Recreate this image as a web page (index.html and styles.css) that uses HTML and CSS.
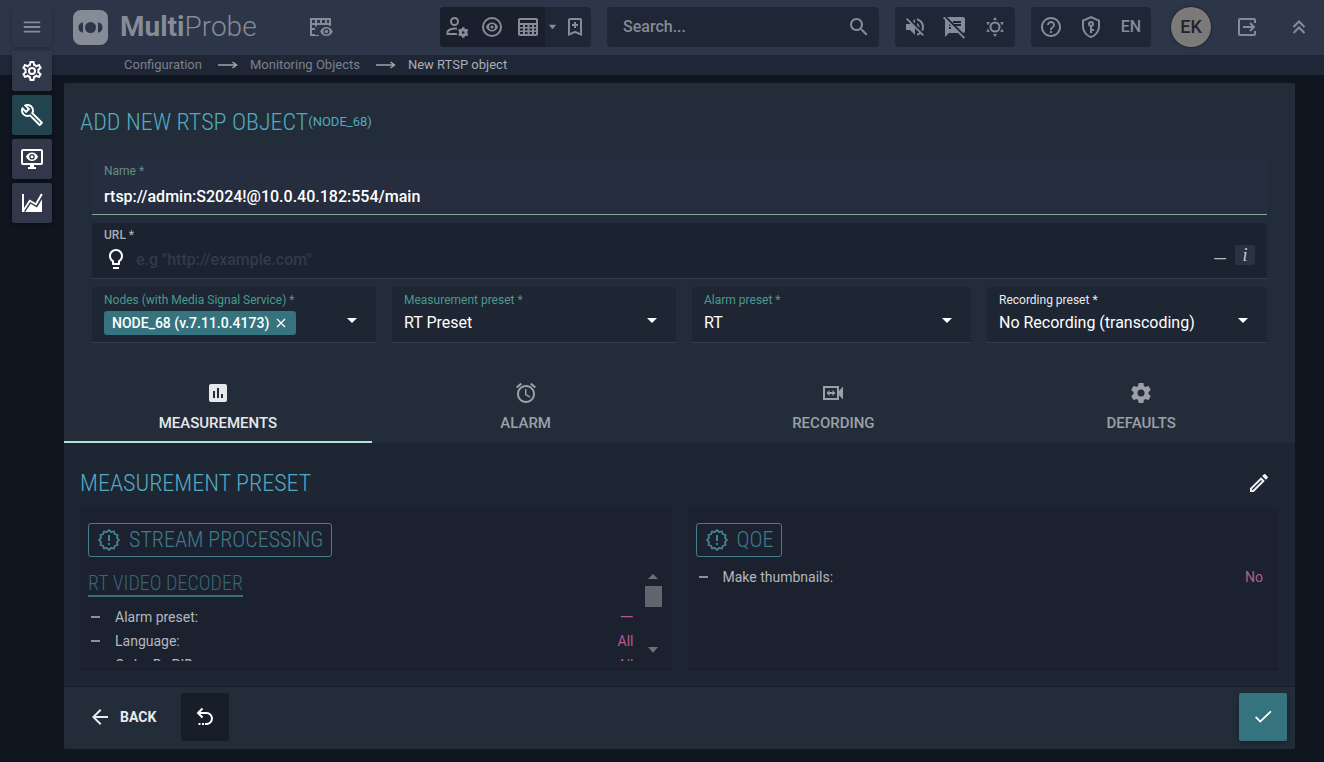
FILE: index.html
```html
<!DOCTYPE html>
<html lang="en">
<head>
<meta charset="utf-8">
<title>MultiProbe – New RTSP object</title>
<meta name="viewport" content="width=device-width, initial-scale=1">
<link rel="stylesheet" href="styles.css">
</head>
<body>
<svg class="sprite" aria-hidden="true">
  <symbol id="menu" viewBox="0 0 24 24"><path d="M3 6h18v2H3zM3 11h18v2H3zM3 16h18v2H3z"/></symbol>
  <symbol id="cog-outline" viewBox="0 0 24 24"><path d="M12,8A4,4 0 0,1 16,12A4,4 0 0,1 12,16A4,4 0 0,1 8,12A4,4 0 0,1 12,8M12,10A2,2 0 0,0 10,12A2,2 0 0,0 12,14A2,2 0 0,0 14,12A2,2 0 0,0 12,10M10,22C9.75,22 9.54,21.82 9.5,21.58L9.13,18.93C8.5,18.68 7.96,18.34 7.44,17.94L4.95,18.95C4.73,19.03 4.46,18.95 4.34,18.73L2.34,15.27C2.21,15.05 2.27,14.78 2.46,14.63L4.57,12.97L4.5,12L4.57,11L2.46,9.37C2.27,9.22 2.21,8.95 2.34,8.73L4.34,5.27C4.46,5.05 4.73,4.96 4.95,5.05L7.44,6.05C7.96,5.66 8.5,5.32 9.13,5.07L9.5,2.42C9.54,2.18 9.75,2 10,2H14C14.25,2 14.46,2.18 14.5,2.42L14.87,5.07C15.5,5.32 16.04,5.66 16.56,6.05L19.05,5.05C19.27,4.96 19.54,5.05 19.66,5.27L21.66,8.73C21.79,8.95 21.73,9.22 21.54,9.37L19.43,11L19.5,12L19.43,13L21.54,14.63C21.73,14.78 21.79,15.05 21.66,15.27L19.66,18.73C19.54,18.95 19.27,19.04 19.05,18.95L16.56,17.95C16.04,18.34 15.5,18.68 14.87,18.93L14.5,21.58C14.46,21.82 14.25,22 14,22H10M11.25,4L10.88,6.61C9.68,6.86 8.62,7.5 7.85,8.39L5.44,7.35L4.69,8.65L6.8,10.2C6.4,11.37 6.4,12.64 6.8,13.8L4.68,15.36L5.43,16.66L7.86,15.62C8.63,16.5 9.68,17.14 10.87,17.38L11.24,20H12.76L13.13,17.39C14.32,17.14 15.37,16.5 16.14,15.62L18.57,16.66L19.32,15.36L17.2,13.81C17.6,12.64 17.6,11.37 17.2,10.2L19.31,8.65L18.56,7.35L16.15,8.39C15.38,7.5 14.32,6.86 13.12,6.62L12.75,4H11.25Z"/></symbol>
  <symbol id="cog" viewBox="0 0 24 24"><path d="M12,15.5A3.5,3.5 0 0,1 8.5,12A3.5,3.5 0 0,1 12,8.5A3.5,3.5 0 0,1 15.5,12A3.5,3.5 0 0,1 12,15.5M19.43,12.97C19.47,12.65 19.5,12.33 19.5,12C19.5,11.67 19.47,11.34 19.43,11L21.54,9.37C21.73,9.22 21.78,8.95 21.66,8.73L19.66,5.27C19.54,5.05 19.27,4.96 19.05,5.05L16.56,6.05C16.04,5.66 15.5,5.32 14.87,5.07L14.5,2.42C14.46,2.18 14.25,2 14,2H10C9.75,2 9.54,2.18 9.5,2.42L9.13,5.07C8.5,5.32 7.96,5.66 7.44,6.05L4.95,5.05C4.73,4.96 4.46,5.05 4.34,5.27L2.34,8.73C2.21,8.95 2.27,9.22 2.46,9.37L4.57,11C4.53,11.34 4.5,11.67 4.5,12C4.5,12.33 4.53,12.65 4.57,12.97L2.46,14.63C2.27,14.78 2.21,15.05 2.34,15.27L4.34,18.73C4.46,18.95 4.73,19.03 4.95,18.95L7.44,17.94C7.96,18.34 8.5,18.68 9.13,18.93L9.5,21.58C9.54,21.82 9.75,22 10,22H14C14.25,22 14.46,21.82 14.5,21.58L14.87,18.93C15.5,18.67 16.04,18.34 16.56,17.94L19.05,18.95C19.27,19.03 19.54,18.95 19.66,18.73L21.66,15.27C21.78,15.05 21.73,14.78 21.54,14.63L19.43,12.97Z"/></symbol>
  <symbol id="wrench" viewBox="0 0 24 24"><path d="M22.61 18.99l-9.08-9.08c.93-2.34.45-5.1-1.44-7C9.79.61 6.21.4 3.66 2.26L7.5 6.11 6.08 7.52 2.25 3.69C.39 6.23.6 9.82 2.9 12.11c1.86 1.86 4.57 2.35 6.89 1.48l9.11 9.11c.39.39 1.02.39 1.41 0l2.3-2.3c.4-.38.4-1.01 0-1.41zm-3 1.6l-9.46-9.46c-.61.45-1.29.72-2 .82-1.36.2-2.79-.21-3.83-1.25C3.37 9.76 2.93 8.5 3 7.26l3.09 3.09 4.24-4.24-3.09-3.09c1.24-.07 2.49.37 3.44 1.31 1.08 1.08 1.49 2.57 1.24 3.96-.12.71-.42 1.37-.88 1.96l9.45 9.45-.88.89z"/></symbol>
  <symbol id="monitor-eye" viewBox="0 0 24 24"><path fill-rule="evenodd" d="M3 2h18a2 2 0 0 1 2 2v12a2 2 0 0 1-2 2h-7v2h2v2H8v-2h2v-2H3a2 2 0 0 1-2-2V4a2 2 0 0 1 2-2zm0 2v12h18V4zm9 1.5c2.7 0 5 1.7 6 4.3-1 2.600-3.300 4.200-6 4.200s-5-1.600-6-4.200c1-2.600 3.300-4.300 6-4.300zm0 1.500a2.800 2.800 0 1 0 0 5.600 2.800 2.800 0 0 0 0-5.600zm0 1.300a1.500 1.500 0 1 1 0 3 1.500 1.500 0 0 1 0-3z"/></symbol>
  <symbol id="chart" viewBox="0 0 24 24"><path d="M2 3h2v14l5.500-8.500 6 3.500L21 2.500l1.700 1L16.300 14.500l-6.200-3.600L4.500 19.500V21H2zM6.500 19l4.200-6.200 6.300 3.600 5-8.200V21H5.200z"/></symbol>
  <symbol id="table-eye" viewBox="0 0 24 24"><path fill-rule="evenodd" d="M1 3h21v8h-2v-1H8v1.500H6V20h4v1H1zm2 2v3h3V5zm5 0v3h3V5zm5 0v3h3V5zm5 0v3h2V5zM3 10v3h3v-3zm0 5v4h3v-4z"/><path fill-rule="evenodd" d="M17.500 12c3 0 5.300 1.800 6.300 4.500-1 2.700-3.300 4.500-6.300 4.500s-5.300-1.800-6.300-4.500c1-2.700 3.300-4.500 6.300-4.500zm0 1.500a3 3 0 1 0 0 6 3 3 0 0 0 0-6zm0 1.300a1.700 1.700 0 1 1 0 3.400 1.700 1.700 0 0 1 0-3.400z"/></symbol>
  <symbol id="account-cog" viewBox="0 0 24 24"><path fill="none" stroke="currentColor" stroke-width="2" d="M13 6.500a3.500 3.500 0 1 1-7 0 3.500 3.500 0 0 1 7 0zM12 13.800c-4-.8-9.500.700-9.500 3.600V19H12"/><path fill="none" stroke="currentColor" stroke-width="3" d="M21 17.500a2.800 2.800 0 1 1-5.600 0 2.800 2.800 0 0 1 5.600 0z"/><path stroke="currentColor" stroke-width="2.400" d="M18.200 12.200v2M18.200 20.800v2M13.600 14.800l1.800 1M21 19.200l1.800 1M13.600 20.200l1.800-1M21 15.800l1.800-1"/></symbol>
  <symbol id="eye-circle" viewBox="0 0 24 24"><path fill-rule="evenodd" d="M12 2a10 10 0 1 1 0 20 10 10 0 0 1 0-20zm0 2a8 8 0 1 0 0 16 8 8 0 0 0 0-16zm0 3.500c2.700 0 5 1.700 6 4.500-1 2.800-3.300 4.500-6 4.500S7 14.800 6 12c1-2.800 3.300-4.500 6-4.500zM12 9a3 3 0 1 0 0 6 3 3 0 0 0 0-6zm0 1.400a1.600 1.600 0 1 1 0 3.200 1.600 1.600 0 0 1 0-3.200z"/></symbol>
  <symbol id="table" viewBox="0 0 24 24"><path fill-rule="evenodd" d="M4 3h16a2 2 0 0 1 2 2v14a2 2 0 0 1-2 2H4a2 2 0 0 1-2-2V5c0-1.100.900-2 2-2zm0 2v3h16V5zm0 5v2h3v-2zm5 0v2h2.500v-2zm4.500 0v2H16v-2zm4.500 0v2h2v-2zM4 13.500v2h3v-2zm5 0v2h2.500v-2zm4.500 0v2H16v-2zm4.500 0v2h2v-2zM4 17v2h3v-2zm5 0v2h2.500v-2zm4.500 0v2H16v-2zm4.500 0v2h2v-2z"/></symbol>
  <symbol id="caret" viewBox="0 0 12 12"><path d="M1 3h10L6 9z"/></symbol>
  <symbol id="caret-up" viewBox="0 0 12 12"><path d="M1 8h10L6 3z"/></symbol>
  <symbol id="bookmark-plus" viewBox="0 0 24 24"><path d="M17,18V5H7V18L12,15.82L17,18M17,3A2,2 0 0,1 19,5V21L12,18L5,21V5C5,3.890 5.900,3 7,3H17M11,7H13V9H15V11H13V13H11V11H9V9H11V7Z"/></symbol>
  <symbol id="search" viewBox="0 0 24 24"><path d="M15.500 14h-.79l-.28-.27C15.410 12.590 16 11.110 16 9.500 16 5.910 13.090 3 9.500 3S3 5.910 3 9.500 5.910 16 9.500 16c1.610 0 3.090-.59 4.230-1.570l.27.28v.79l5 4.990L20.490 19l-4.990-5zm-6 0C7.010 14 5 11.990 5 9.500S7.010 5 9.500 5 14 7.010 14 9.500 11.990 14 9.500 14z"/></symbol>
  <symbol id="volume-off" viewBox="0 0 24 24"><path d="M16.500 12c0-1.770-1.020-3.290-2.500-4.030v2.210l2.450 2.450c.03-.2.05-.41.05-.63zm2.500 0c0 .94-.2 1.820-.54 2.640l1.510 1.510C20.630 14.910 21 13.500 21 12c0-4.280-2.990-7.860-7-8.770v2.060c2.890.86 5 3.540 5 6.710zM4.270 3L3 4.270 7.730 9H3v6h4l5 5v-6.730l4.250 4.250c-.67.52-1.420.93-2.250 1.180v2.060c1.380-.31 2.630-.95 3.690-1.810L19.730 21 21 19.730l-9-9L4.270 3zM12 4L9.910 6.090 12 8.180V4z"/></symbol>
  <symbol id="notes-off" viewBox="0 0 24 24"><path d="M10.540 11l-.54-.54L7.540 8 6 6.460 2.380 2.840 1.270 1.730 0 3l2.010 2.010L2 22l4-4h9l5.730 5.730L22 22.460 17.540 18l-7-7zM8 14H6v-2h2v2zm-2-3V9l2 2H6zm14-9H4.080L10 7.920V6h8v2h-7.920l1 1H18v2h-4.920l6.990 6.990C21.140 17.950 22 17.080 22 16V4c0-1.100-.9-2-2-2z"/></symbol>
  <symbol id="sun" viewBox="0 0 24 24"><circle cx="12" cy="12" r="4.500" fill="none" stroke="currentColor" stroke-width="2"/><path d="M12 2l2 3h-4zM12 22l2-3h-4zM3.300 7l3.600.2-2 3.400zM20.700 7l-3.600.2 2 3.400zM3.300 17l3.600-.2-2-3.400zM20.700 17l-3.600-.2 2-3.400z"/></symbol>
  <symbol id="help" viewBox="0 0 24 24"><path d="M11 18h2v-2h-2v2zm1-16C6.480 2 2 6.480 2 12s4.480 10 10 10 10-4.480 10-10S17.520 2 12 2zm0 18c-4.410 0-8-3.590-8-8s3.590-8 8-8 8 3.590 8 8-3.590 8-8 8zm0-14c-2.210 0-4 1.790-4 4h2c0-1.100.9-2 2-2s2 .9 2 2c0 2-3 1.750-3 5h2c0-2.250 3-2.500 3-5 0-2.210-1.790-4-4-4z"/></symbol>
  <symbol id="shield-key" viewBox="0 0 24 24"><path d="M21,11C21,16.550 17.160,21.740 12,23C6.840,21.740 3,16.550 3,11V5L12,1L21,5V11M12,21C15.750,20 19,15.540 19,11.220V6.300L12,3.180L5,6.300V11.220C5,15.540 8.250,20 12,21M12,6A3,3 0 0,1 15,9C15,10.310 14.170,11.420 13,11.830V14H15V16H13V18H11V11.830C9.830,11.420 9,10.310 9,9A3,3 0 0,1 12,6M12,8A1,1 0 0,0 11,9A1,1 0 0,0 12,10A1,1 0 0,0 13,9A1,1 0 0,0 12,8Z"/></symbol>
  <symbol id="exit" viewBox="0 0 24 24"><path fill="none" stroke="currentColor" stroke-width="2" d="M20 8V5a1 1 0 0 0-1-1H5a1 1 0 0 0-1 1v14a1 1 0 0 0 1 1h14a1 1 0 0 0 1-1v-3M8 12h11M15 8l4 4-4 4"/></symbol>
  <symbol id="double-up" viewBox="0 0 24 24"><path fill="none" stroke="currentColor" stroke-width="2" d="M6.500 12L12 6.500l5.500 5.500M6.500 18L12 12.500l5.500 5.500"/></symbol>
  <symbol id="arrow-right" viewBox="0 0 20 12"><path fill="none" stroke="currentColor" stroke-width="1.500" d="M0 6h18M14.500 3l4 3-4 3"/></symbol>
  <symbol id="bulb" viewBox="0 0 24 24"><path d="M9 20h6v2H9zM12 2C8.140 2 5 5.140 5 9c0 2.380 1.190 4.470 3 5.740V17c0 .55.45 1 1 1h6c.55 0 1-.45 1-1v-2.260c1.810-1.270 3-3.360 3-5.740 0-3.860-3.140-7-7-7zm2.850 11.100l-.85.6V16h-4v-2.300l-.85-.6C7.800 12.160 7 10.630 7 9c0-2.760 2.240-5 5-5s5 2.240 5 5c0 1.630-.8 3.160-2.150 4.100z"/></symbol>
  <symbol id="close" viewBox="0 0 12 12"><path fill="none" stroke="currentColor" stroke-width="1.300" d="M2 2l8 8M10 2l-8 8"/></symbol>
  <symbol id="drop" viewBox="0 0 12 12"><path d="M1 3h10L6 8z"/></symbol>
  <symbol id="assessment" viewBox="0 0 24 24"><path d="M19 3H5c-1.100 0-2 .9-2 2v14c0 1.100.9 2 2 2h14c1.100 0 2-.9 2-2V5c0-1.100-.9-2-2-2zM9 17H7v-7h2v7zm4 0h-2V7h2v10zm4 0h-2v-4h2v4z"/></symbol>
  <symbol id="alarm" viewBox="0 0 24 24"><path d="M22 5.720l-4.600-3.860-1.290 1.530 4.600 3.860L22 5.720zM7.880 3.390L6.600 1.860 2 5.710l1.290 1.530 4.590-3.850zM12.500 8H11v6l4.750 2.850.75-1.230-4-2.370V8zM12 4c-4.970 0-9 4.030-9 9s4.020 9 9 9c4.970 0 9-4.030 9-9s-4.030-9-9-9zm0 16c-3.870 0-7-3.130-7-7s3.130-7 7-7 7 3.130 7 7-3.130 7-7 7z"/></symbol>
  <symbol id="video" viewBox="0 0 24 24"><path fill="none" stroke="currentColor" stroke-width="2" d="M3 6h14v12H3z"/><path d="M17 11l5-5.500v13L17 13zM5.500 12L8.500 9v2h3V9l3 3-3 3v-2h-3v2z"/></symbol>
  <symbol id="pencil" viewBox="0 0 24 24"><path d="M14.060 9.020l.92.92L5.920 19H5v-.92l9.060-9.060M17.660 3c-.25 0-.51.1-.7.29l-1.830 1.830 3.750 3.750 1.830-1.830c.39-.39.39-1.020 0-1.410l-2.340-2.340c-.2-.2-.45-.29-.71-.29zm-3.600 3.190L3 17.250V21h3.750L17.810 9.940l-3.750-3.750z"/></symbol>
  <symbol id="badge" viewBox="0 0 24 24"><path fill="none" stroke="currentColor" stroke-width="1.800" stroke-linejoin="round" d="M22 12L19.900 14.100 20.700 17 17.800 17.800 17 20.700 14.100 19.900 12 22 9.900 19.900 7 20.700 6.200 17.800 3.300 17 4.100 14.100 2 12 4.100 9.900 3.300 7 6.200 6.200 7 3.300 9.900 4.100 12 2 14.100 4.100 17 3.300 17.800 6.200 20.700 7 19.900 9.900z"/><path d="M11 7h2v6h-2zM11 15h2v2h-2z"/></symbol>
  <symbol id="arrow-left" viewBox="0 0 24 24"><path d="M20 11H7.830l5.590-5.590L12 4l-8 8 8 8 1.410-1.410L7.830 13H20v-2z"/></symbol>
  <symbol id="undo" viewBox="0 0 24 24"><path fill="none" stroke="currentColor" stroke-width="2" d="M9.500 3.500L5 8l4.500 4.500M5 8h8.500a5.500 5.500 0 0 1 0 11H12"/><path d="M5.500 18h2v2h-2zM9 18h2v2H9z"/></symbol>
  <symbol id="check" viewBox="0 0 24 24"><path fill="none" stroke="currentColor" stroke-width="2" stroke-linecap="round" d="M4.500 12.500l4.500 4.500L20 6.500"/></symbol>
</svg>

<header class="topbar">
  <button class="tile tile-menu" aria-label="Menu"><svg class="icon"><use href="#menu"/></svg></button>
  <a class="brand" href="#" aria-label="MultiProbe">
    <svg class="brand-mark" viewBox="0 0 35 35" aria-hidden="true"><rect width="35" height="35" rx="8" fill="#858b97"/><g fill="#2d3648"><circle cx="17.500" cy="17.500" r="5.500"/><path d="M10 12.500v10c-3 0-4.500-2.500-4.500-5s1.500-5 4.500-5zM25 12.500v10c3 0 4.500-2.500 4.500-5s-1.500-5-4.500-5z"/></g></svg>
    <span class="brand-name"><b>Multi</b>Probe</span>
  </a>
  <button class="icon-btn views" aria-label="Views"><svg class="icon"><use href="#table-eye"/></svg></button>
  <div class="topbar-tools">
    <div class="group">
      <div class="group-dark">
        <button class="icon-btn" aria-label="User settings"><svg class="icon"><use href="#account-cog"/></svg></button>
        <button class="icon-btn" aria-label="Watch"><svg class="icon"><use href="#eye-circle"/></svg></button>
        <button class="icon-btn" aria-label="Table view"><svg class="icon"><use href="#table"/></svg></button>
      </div>
      <button class="caret-btn" aria-label="More views"><svg><use href="#caret"/></svg></button>
      <button class="icon-btn" aria-label="Add bookmark"><svg class="icon"><use href="#bookmark-plus"/></svg></button>
    </div>
    <label class="search"><input type="text" placeholder="Search..." aria-label="Search"><svg class="icon"><use href="#search"/></svg></label>
    <div class="group wide">
      <button class="icon-btn" aria-label="Sound off"><svg class="icon"><use href="#volume-off"/></svg></button>
      <button class="icon-btn" aria-label="Notes off"><svg class="icon"><use href="#notes-off"/></svg></button>
      <button class="icon-btn" aria-label="Brightness"><svg class="icon"><use href="#sun"/></svg></button>
    </div>
    <div class="group wide">
      <button class="icon-btn" aria-label="Help"><svg class="icon"><use href="#help"/></svg></button>
      <button class="icon-btn" aria-label="Access"><svg class="icon"><use href="#shield-key"/></svg></button>
      <button class="icon-btn lang">EN</button>
    </div>
    <div class="account">
      <button class="avatar">EK</button>
      <button class="icon-btn" aria-label="Log out"><svg class="icon"><use href="#exit"/></svg></button>
      <button class="icon-btn" aria-label="Collapse"><svg class="icon"><use href="#double-up"/></svg></button>
    </div>
  </div>
</header>

<nav class="crumbs" aria-label="Breadcrumb">
  <a href="#">Configuration</a>
  <svg><use href="#arrow-right"/></svg>
  <a href="#">Monitoring Objects</a>
  <svg><use href="#arrow-right"/></svg>
  <span class="current">New RTSP object</span>
</nav>

<nav class="side" aria-label="Sections">
  <button class="tile" aria-label="Settings"><svg class="icon"><use href="#cog-outline"/></svg></button>
  <button class="tile active" aria-label="Configuration"><svg class="icon"><use href="#wrench"/></svg></button>
  <button class="tile" aria-label="Monitoring"><svg class="icon"><use href="#monitor-eye"/></svg></button>
  <button class="tile" aria-label="Charts"><svg class="icon"><use href="#chart"/></svg></button>
</nav>

<main class="page">
  <form class="panel" onsubmit="return false">
    <h1 class="title">ADD NEW RTSP OBJECT<small>(NODE_68)</small></h1>

    <div class="fields">
      <div class="field name">
        <label for="name">Name *</label>
        <input id="name" type="text" value="rtsp://admin:S2024!@10.0.40.182:554/main">
      </div>
      <div class="field url">
        <label for="url">URL *</label>
        <div class="url-row">
          <svg class="icon"><use href="#bulb"/></svg>
          <input id="url" type="text" placeholder='e.g "http://example.com"'>
          <span class="dash">—</span>
          <button class="info" type="button" aria-label="Information">i</button>
        </div>
      </div>
      <div class="presets">
        <div class="field">
          <span class="label">Nodes (with Media Signal Service) *</span>
          <div class="select-row">
            <span class="chip">NODE_68 (v.7.11.0.4173)<button type="button" aria-label="Remove node"><svg><use href="#close"/></svg></button></span>
            <button type="button" class="drop" aria-label="Open nodes"><svg><use href="#drop"/></svg></button>
          </div>
        </div>
        <div class="field">
          <label for="measure">Measurement preset *</label>
          <div class="select-row"><select id="measure"><option>RT Preset</option></select><span class="drop"><svg><use href="#drop"/></svg></span></div>
        </div>
        <div class="field">
          <label for="alarm-preset">Alarm preset *</label>
          <div class="select-row"><select id="alarm-preset"><option>RT</option></select><span class="drop"><svg><use href="#drop"/></svg></span></div>
        </div>
        <div class="field bright">
          <label for="rec">Recording preset *</label>
          <div class="select-row"><select id="rec"><option>No Recording (transcoding)</option></select><span class="drop"><svg><use href="#drop"/></svg></span></div>
        </div>
      </div>
    </div>

    <div class="tabs" role="tablist">
      <button type="button" role="tab" aria-selected="true" class="tab active"><svg class="icon"><use href="#assessment"/></svg>MEASUREMENTS</button>
      <button type="button" role="tab" class="tab"><svg class="icon"><use href="#alarm"/></svg>ALARM</button>
      <button type="button" role="tab" class="tab"><svg class="icon"><use href="#video"/></svg>RECORDING</button>
      <button type="button" role="tab" class="tab"><svg class="icon"><use href="#cog"/></svg>DEFAULTS</button>
    </div>

    <section class="content">
      <div class="content-head">
        <h2>MEASUREMENT PRESET</h2>
        <button type="button" class="edit" aria-label="Edit"><svg class="icon"><use href="#pencil"/></svg></button>
      </div>
      <div class="cards">
        <article class="card">
          <h3 class="badge"><svg class="icon"><use href="#badge"/></svg>STREAM PROCESSING</h3>
          <div class="scroll">
            <div class="scroll-body">
              <h4>RT VIDEO DECODER</h4>
              <ul class="props">
                <li><span>Alarm preset:</span><em class="dash">—</em></li>
                <li><span>Language:</span><em>All</em></li>
                <li><span>Order By PID:</span><em>All</em></li>
              </ul>
            </div>
            <div class="scrollbar" aria-hidden="true">
              <svg><use href="#caret-up"/></svg>
              <span class="thumb"></span>
              <svg><use href="#caret"/></svg>
            </div>
          </div>
        </article>
        <article class="card">
          <h3 class="badge"><svg class="icon"><use href="#badge"/></svg>QOE</h3>
          <ul class="props single">
            <li><span>Make thumbnails:</span><em>No</em></li>
          </ul>
        </article>
      </div>
    </section>

    <footer class="actions">
      <button type="button" class="back"><svg class="icon"><use href="#arrow-left"/></svg>BACK</button>
      <button type="button" class="square" aria-label="Undo"><svg class="icon"><use href="#undo"/></svg></button>
      <button type="submit" class="square save" aria-label="Save"><svg class="icon"><use href="#check"/></svg></button>
    </footer>
  </form>
</main>
</body>
</html>
```
FILE: styles.css
```css
* { box-sizing: border-box; }

body {
  margin: 0;
  min-height: 100vh;
  display: flex;
  flex-direction: column;
  position: relative;
  background: #0f1620;
  color: #e4e6ea;
  font: 14px/20px Roboto, "Liberation Sans", sans-serif;
}

button, input, select { font: inherit; color: inherit; background: none; border: 0; padding: 0; margin: 0; outline: 0; }
button { cursor: pointer; }
a { color: inherit; text-decoration: none; }
h1, h2, h3, h4, ul { margin: 0; padding: 0; font-weight: 300; }
svg { fill: currentColor; flex: none; display: block; }
.sprite { position: absolute; width: 0; height: 0; }
.icon { width: 24px; height: 24px; }

/* Top bar */
.topbar {
  display: flex;
  align-items: center;
  height: 55px;
  padding: 0 13px 1px 12px;
  background: #2d3648;
  color: #858b97;
}
.tile {
  display: grid;
  place-items: center;
  width: 40px;
  height: 40px;
  border-radius: 2px;
  background: #30384a;
  color: #fff;
  box-shadow: 0 2px 4px rgba(0, 0, 0, .35);
}
.tile.active { background: #22444e; }
.tile-menu { background: #2d3547; color: #858b97; box-shadow: 0 2px 4px rgba(0, 0, 0, .2); }
.tile-menu .icon { width: 22px; height: 22px; }
.brand { display: flex; align-items: center; gap: 12px; margin-left: 21px; }
.brand-mark { width: 35px; height: 35px; }
.brand-name { font-size: 28px; line-height: 36px; font-weight: 300; }
.brand-name b { font-weight: 700; }
.icon-btn { display: grid; place-items: center; width: 36px; height: 40px; }
.views { margin-left: 46px; }
.topbar-tools { display: flex; align-items: center; gap: 16px; margin-left: auto; }
.group { display: flex; height: 40px; border-radius: 4px; background: #1f2736; }
.group-dark { display: flex; width: 105px; border-radius: 4px 0 0 4px; background: #191f2c; }
.group-dark .icon-btn { width: 36px; flex: none; }
.group-dark .icon-btn:first-child { width: 34px; }
.caret-btn { display: grid; place-items: center; width: 14px; }
.caret-btn svg { width: 9px; height: 12px; }
.group > .icon-btn { width: 32px; }
.group.wide > .icon-btn { width: 40px; }
.lang { font-size: 16px; font-weight: 500; }
.search {
  display: flex;
  align-items: center;
  width: 272px;
  height: 40px;
  padding: 0 8px 0 16px;
  border-radius: 4px;
  background: #1f2736;
}
.search input { flex: 1; min-width: 0; font-size: 16px; font-weight: 500; }
.search input::placeholder { color: #858b97; opacity: 1; }
.account { display: flex; align-items: center; margin-left: 4px; }
.avatar {
  width: 40px;
  height: 40px;
  border-radius: 50%;
  background: #7b7a78;
  color: #1f2430;
  font-size: 18px;
  font-weight: 500;
  box-shadow: 0 0 3px rgba(0, 0, 0, .6);
}
.account .icon-btn { margin-left: 18px; }
.account .icon-btn + .icon-btn { margin-left: 16px; margin-right: -6px; }

/* Breadcrumb */
.crumbs {
  display: flex;
  align-items: center;
  height: 20px;
  padding-left: 124px;
  gap: 16px;
  background: #1f2736;
  color: #7a808d;
  font-size: 13px;
}
.crumbs svg { width: 20px; height: 12px; color: #a0a4ad; }
.crumbs a + svg { margin-right: -4px; }
.crumbs .current { color: #a9adb5; }

/* Section buttons lie over the edge of the top bar */
.side {
  position: absolute;
  top: 51px;
  left: 12px;
  display: flex;
  flex-direction: column;
  gap: 4px;
}

/* Main panel */
.page { flex: 1; display: flex; padding: 8px 29px 13px 64px; }
.panel {
  flex: 1;
  min-width: 0;
  display: flex;
  flex-direction: column;
  border-radius: 2px;
  background: #232d3a;
}
.title, .content h2 {
  color: #52aac0;
  font-family: "Roboto Condensed", Roboto, "Liberation Sans", sans-serif;
  font-size: 24px;
  line-height: 28px;
  font-weight: 300;
}
.title { display: flex; align-items: center; padding: 25px 16px 23px; }
.title small { font-size: 13px; line-height: 20px; font-family: Roboto, sans-serif; font-weight: 400; }

.fields { display: grid; gap: 8px; padding: 0 28px; }
.field {
  display: flex;
  flex-direction: column;
  height: 56px;
  min-width: 0;
  padding: 4px 12px 0;
  background: #1e2533;
  border-bottom: 1px solid #333e4d;
  border-radius: 2px 2px 0 0;
}
.field label, .field .label { font-size: 12px; line-height: 18px; color: #4a9a8e; }
.field.bright label { color: #e8eaee; }
.field input { font-size: 16px; }
.field.name { background: #262d3e; border-bottom-color: #7fa99f; }
.field.name label { line-height: 16px; color: #628f86; }
.field.name input { height: 34px; font-weight: 500; color: #fff; }
.field.url { background: #1b2230; }
.field.url label { line-height: 16px; color: #a9adb5; font-weight: 500; }
.url-row { display: flex; align-items: center; height: 32px; }
.url-row .icon { color: #fff; }
.url-row input { flex: 1; min-width: 0; height: 32px; margin-left: 8px; font-weight: 500; }
.url-row input::placeholder { color: #343a48; opacity: 1; }
.url-row .dash { color: #b9bcc4; }
.dash { font-size: 18px; }
.info {
  align-self: flex-start;
  width: 20px;
  height: 20px;
  margin: 2px 0 0 8px;
  border-radius: 2px;
  background: #2b3343;
  color: #c9ccd2;
  font: italic 18px/20px "Liberation Serif", serif;
}
.presets { display: grid; grid-template-columns: 284fr 284fr 279fr 280fr; gap: 16px; }
.select-row { display: flex; align-items: center; height: 28px; }
.select-row select {
  flex: 1;
  min-width: 0;
  height: 28px;
  appearance: none;
  font-size: 16px;
  color: #fff;
}
.drop { margin: 0 6px 4px auto; color: #fff; pointer-events: none; }
.drop svg { width: 12px; height: 12px; }
.chip {
  display: flex;
  align-items: center;
  gap: 6px;
  height: 24px;
  padding: 0 9px 0 8px;
  border-radius: 3px;
  background: #35747f;
  color: #fff;
  font-weight: 500;
  white-space: nowrap;
}
.chip svg { width: 12px; height: 12px; }

/* Tabs */
.tabs { display: grid; grid-template-columns: repeat(4, 1fr); margin-top: 28px; }
.tab {
  display: flex;
  flex-direction: column;
  align-items: center;
  gap: 8px;
  height: 72px;
  padding-top: 10px;
  border-bottom: 2px solid transparent;
  color: #9ba0a9;
  font-size: 15px;
  font-weight: 500;
}
.tab.active { color: #e6e8ec; border-bottom-color: #b5e3dc; }

/* Tab content */
.content {
  flex: 1;
  display: flex;
  flex-direction: column;
  padding: 16px;
  background: #1e2634;
  border-bottom: 1px solid #19202c;
}
.content-head { display: flex; align-items: center; justify-content: space-between; height: 48px; padding: 0 8px 0 0; }
.edit { color: #f0f1f3; }
.cards { flex: 1; display: grid; grid-template-columns: 1fr 1fr; gap: 16px; }
.card {
  display: flex;
  flex-direction: column;
  align-items: flex-start;
  min-width: 0;
  padding: 16px 8px 8px;
  background: #1b212e;
  border-bottom: 1px solid #151b26;
}
.badge {
  display: flex;
  align-items: center;
  gap: 8px;
  height: 34px;
  padding: 0 8px;
  border: 1px solid #43808d;
  border-radius: 3px;
  color: #3f7b8a;
  font-family: "Roboto Condensed", Roboto, "Liberation Sans", sans-serif;
  font-size: 22px;
}
.badge .icon { color: #43808d; }
.scroll { display: flex; width: 100%; margin-top: 12px; height: 92px; overflow: hidden; }
.scroll-body { flex: 1; min-width: 0; }
.scroll h4 {
  display: inline-block;
  color: #356775;
  border-bottom: 2px solid #37707d;
  font-family: "Roboto Condensed", Roboto, "Liberation Sans", sans-serif;
  font-size: 20px;
  line-height: 24px;
  margin: 2px 0 8px;
}
.props { width: 100%; list-style: none; }
.props li {
  display: flex;
  align-items: center;
  height: 24px;
  padding-left: 3px;
  color: #b4b7be;
  font-weight: 400;
}
.props li::before { content: ""; width: 9px; height: 2px; margin-right: 15px; background: #8d919b; }
.props em { margin-left: auto; font-style: normal; color: #b85a91; }
.props.single { margin-top: 8px; padding-right: 8px; }
.scrollbar { display: flex; flex-direction: column; align-items: center; width: 17px; margin: 0 2px 0 11px; padding: 2px 0 5px; color: #6b6f78; }
.scrollbar svg { width: 12px; height: 12px; }
.scrollbar svg:last-child { margin-top: auto; }
.thumb { width: 17px; height: 21px; margin-top: 3px; background: #62656e; }

/* Footer */
.actions { display: flex; align-items: center; height: 62px; padding: 0 8px 2px 24px; }
.back { display: flex; align-items: center; gap: 8px; font-weight: 700; color: #e8eaee; }
.square {
  display: grid;
  place-items: center;
  width: 48px;
  height: 48px;
  margin-left: 25px;
  border-radius: 2px;
  background: #171e2a;
  color: #fff;
}
.square.save { margin-left: auto; background: #35747f; box-shadow: 0 2px 6px rgba(0, 0, 0, .35); }
.save .icon { width: 22px; height: 22px; }
```
